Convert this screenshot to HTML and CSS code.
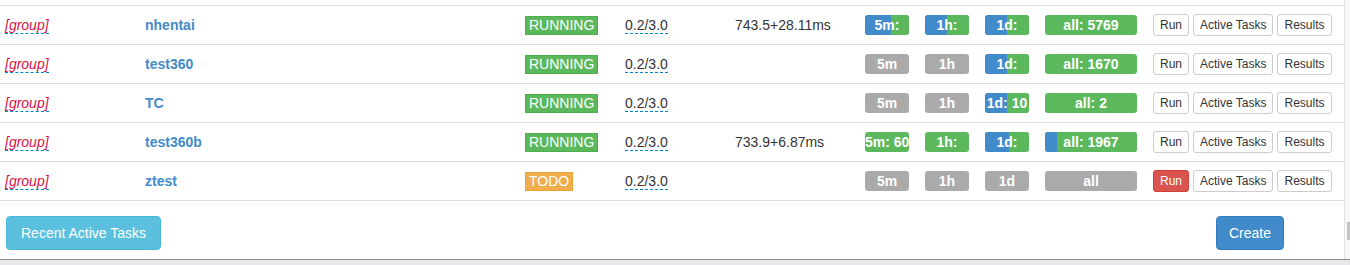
FILE: index.html
```html
<!DOCTYPE html>
<html lang="en">
<head>
  <meta charset="utf-8" />
  <title>pyspider dashboard</title>
  <link rel="stylesheet" href="styles.css">
</head>
<body>
  <div class="window">
    <div class="viewport">
      <table class="projects">
        <colgroup>
          <col class="c-group"><col class="c-name"><col class="c-status"><col class="c-rate"><col class="c-time"><col class="c-progress"><col class="c-actions">
        </colgroup>
        <tbody>
          <tr>
            <td><span class="group editable">[group]</span></td>
            <td><a class="name">nhentai</a></td>
            <td><span class="label label-running">RUNNING</span></td>
            <td><span class="editable">0.2/3.0</span></td>
            <td>743.5+28.11ms</td>
            <td>
              <div class="progress-set">
                <div class="progress"><div class="bar blue" style="width:59%"></div><div class="bar green" style="width:41%"></div><span class="progress-text">5m:</span></div>
                <div class="progress"><div class="bar blue" style="width:50%"></div><div class="bar green" style="width:50%"></div><span class="progress-text">1h:</span></div>
                <div class="progress"><div class="bar blue" style="width:50%"></div><div class="bar green" style="width:50%"></div><span class="progress-text">1d:</span></div>
                <div class="progress wide"><div class="bar green" style="width:100%"></div><span class="progress-text">all: 5769</span></div>
              </div>
            </td>
            <td><div class="btns"><button class="btn btn-xs">Run</button><button class="btn btn-xs">Active Tasks</button><button class="btn btn-xs">Results</button></div></td>
          </tr>
          <tr>
            <td><span class="group editable">[group]</span></td>
            <td><a class="name">test360</a></td>
            <td><span class="label label-running">RUNNING</span></td>
            <td><span class="editable">0.2/3.0</span></td>
            <td></td>
            <td>
              <div class="progress-set">
                <div class="progress"><span class="progress-text">5m</span></div>
                <div class="progress"><span class="progress-text">1h</span></div>
                <div class="progress"><div class="bar blue" style="width:50%"></div><div class="bar green" style="width:50%"></div><span class="progress-text">1d:</span></div>
                <div class="progress wide"><div class="bar green" style="width:100%"></div><span class="progress-text">all: 1670</span></div>
              </div>
            </td>
            <td><div class="btns"><button class="btn btn-xs">Run</button><button class="btn btn-xs">Active Tasks</button><button class="btn btn-xs">Results</button></div></td>
          </tr>
          <tr>
            <td><span class="group editable">[group]</span></td>
            <td><a class="name">TC</a></td>
            <td><span class="label label-running">RUNNING</span></td>
            <td><span class="editable">0.2/3.0</span></td>
            <td></td>
            <td>
              <div class="progress-set">
                <div class="progress"><span class="progress-text">5m</span></div>
                <div class="progress"><span class="progress-text">1h</span></div>
                <div class="progress"><div class="bar blue" style="width:50%"></div><div class="bar green" style="width:50%"></div><span class="progress-text">1d: 10</span></div>
                <div class="progress wide"><div class="bar green" style="width:100%"></div><span class="progress-text">all: 2</span></div>
              </div>
            </td>
            <td><div class="btns"><button class="btn btn-xs">Run</button><button class="btn btn-xs">Active Tasks</button><button class="btn btn-xs">Results</button></div></td>
          </tr>
          <tr>
            <td><span class="group editable">[group]</span></td>
            <td><a class="name">test360b</a></td>
            <td><span class="label label-running">RUNNING</span></td>
            <td><span class="editable">0.2/3.0</span></td>
            <td>733.9+6.87ms</td>
            <td>
              <div class="progress-set">
                <div class="progress"><div class="bar green" style="width:100%"></div><span class="progress-text">5m: 60</span></div>
                <div class="progress"><div class="bar green" style="width:100%"></div><span class="progress-text">1h:</span></div>
                <div class="progress"><div class="bar blue" style="width:55%"></div><div class="bar green" style="width:45%"></div><span class="progress-text">1d:</span></div>
                <div class="progress wide"><div class="bar blue" style="width:13%"></div><div class="bar green" style="width:87%"></div><span class="progress-text">all: 1967</span></div>
              </div>
            </td>
            <td><div class="btns"><button class="btn btn-xs">Run</button><button class="btn btn-xs">Active Tasks</button><button class="btn btn-xs">Results</button></div></td>
          </tr>
          <tr>
            <td><span class="group editable">[group]</span></td>
            <td><a class="name">ztest</a></td>
            <td><span class="label label-todo">TODO</span></td>
            <td><span class="editable">0.2/3.0</span></td>
            <td></td>
            <td>
              <div class="progress-set">
                <div class="progress"><span class="progress-text">5m</span></div>
                <div class="progress"><span class="progress-text">1h</span></div>
                <div class="progress"><span class="progress-text">1d</span></div>
                <div class="progress wide"><span class="progress-text">all</span></div>
              </div>
            </td>
            <td><div class="btns"><button class="btn btn-xs btn-danger">Run</button><button class="btn btn-xs">Active Tasks</button><button class="btn btn-xs">Results</button></div></td>
          </tr>
        </tbody>
      </table>

      <div class="footer">
        <button class="btn btn-info">Recent Active Tasks</button>
        <button class="btn btn-primary">Create</button>
      </div>
    </div>
    <div class="scrollbar"><div class="thumb"></div></div>
  </div>
  <div class="statusbar"></div>
</body>
</html>
```

FILE: styles.css
```css
html,
body {
  margin: 0;
  padding: 0;
  background: #fff;
  font-family: 'Liberation Sans', Arial, sans-serif;
  font-size: 14px;
  color: #333;
  overflow: hidden;
}

.window {
  display: flex;
  height: 259px;
  border-bottom: 1px solid #8a8a8a;
}

.viewport {
  width: 1344px;
  padding-top: 5px;
  box-sizing: border-box;
}

.scrollbar {
  display: flex;
  flex-direction: column;
  justify-content: flex-end;
  width: 6px;
  border-left: 1px solid #e2e2e2;
  background: #f7f7f7;
  box-sizing: border-box;
  padding: 0 0 19px 2px;
}

.thumb {
  height: 18px;
  background: #c3c3c3;
}

.statusbar {
  height: 5px;
  background: #e6e8ec;
}

.projects {
  width: 100%;
  table-layout: fixed;
  border-collapse: collapse;
}

.c-group { width: 137px; }
.c-name { width: 380px; }
.c-status { width: 100px; }
.c-rate { width: 110px; }
.c-time { width: 130px; }
.c-progress { width: 288px; }

.projects td {
  padding: 8px;
  height: 22px;
  border-top: 1px solid #ddd;
  vertical-align: middle;
  white-space: nowrap;
  line-height: 20px;
}

.projects tr:last-child td {
  border-bottom: 1px solid #ddd;
}

.projects td:first-child {
  padding-left: 5px;
}

.editable {
  border-bottom: 1px dashed #0088cc;
}

.group {
  font-style: italic;
  color: #dd1144;
}

.name {
  font-weight: bold;
  color: #428bca;
}

.label {
  display: inline-block;
  padding: 0 3px;
  line-height: 17px;
  color: #fff;
  border: 1px solid;
}

.label-running {
  background: #5cb85c;
  border-color: #4cae4c;
}

.label-todo {
  background: #f0ad4e;
  border-color: #eea236;
}

.progress-set {
  display: flex;
  gap: 16px;
}

.progress {
  position: relative;
  display: flex;
  width: 44px;
  height: 20px;
  border-radius: 3px;
  overflow: hidden;
  background: #aaa;
}

.progress.wide {
  width: 92px;
}

.bar {
  height: 100%;
}

.bar.blue { background: #428bca; }
.bar.green { background: #5cb85c; }

.progress-text {
  position: absolute;
  top: 0;
  left: 0;
  right: 0;
  text-align: center;
  font-weight: bold;
  font-size: 14px;
  line-height: 20px;
  color: #fff;
  white-space: nowrap;
}

.btns {
  display: flex;
  gap: 4px;
}

.btn {
  font-family: 'Liberation Sans', Arial, sans-serif;
  font-size: 14px;
  line-height: 20px;
  padding: 6px 12px;
  border: 1px solid #ccc;
  border-radius: 4px;
  background: #fff;
  color: #333;
  cursor: pointer;
}

.btn-xs {
  font-size: 12px;
  line-height: 18px;
  padding: 1px 6px;
  border-radius: 3px;
}

.btn-danger {
  background: #d9534f;
  border-color: #d43f3a;
  color: #fff;
}

.btn-info {
  padding: 6px 14px;
  background: #5bc0de;
  border-color: #46b8da;
  color: #fff;
}

.btn-primary {
  background: #428bca;
  border-color: #357ebd;
  color: #fff;
}

.footer {
  display: flex;
  justify-content: space-between;
  margin-top: 15px;
  padding: 0 60px 0 6px;
}
```
